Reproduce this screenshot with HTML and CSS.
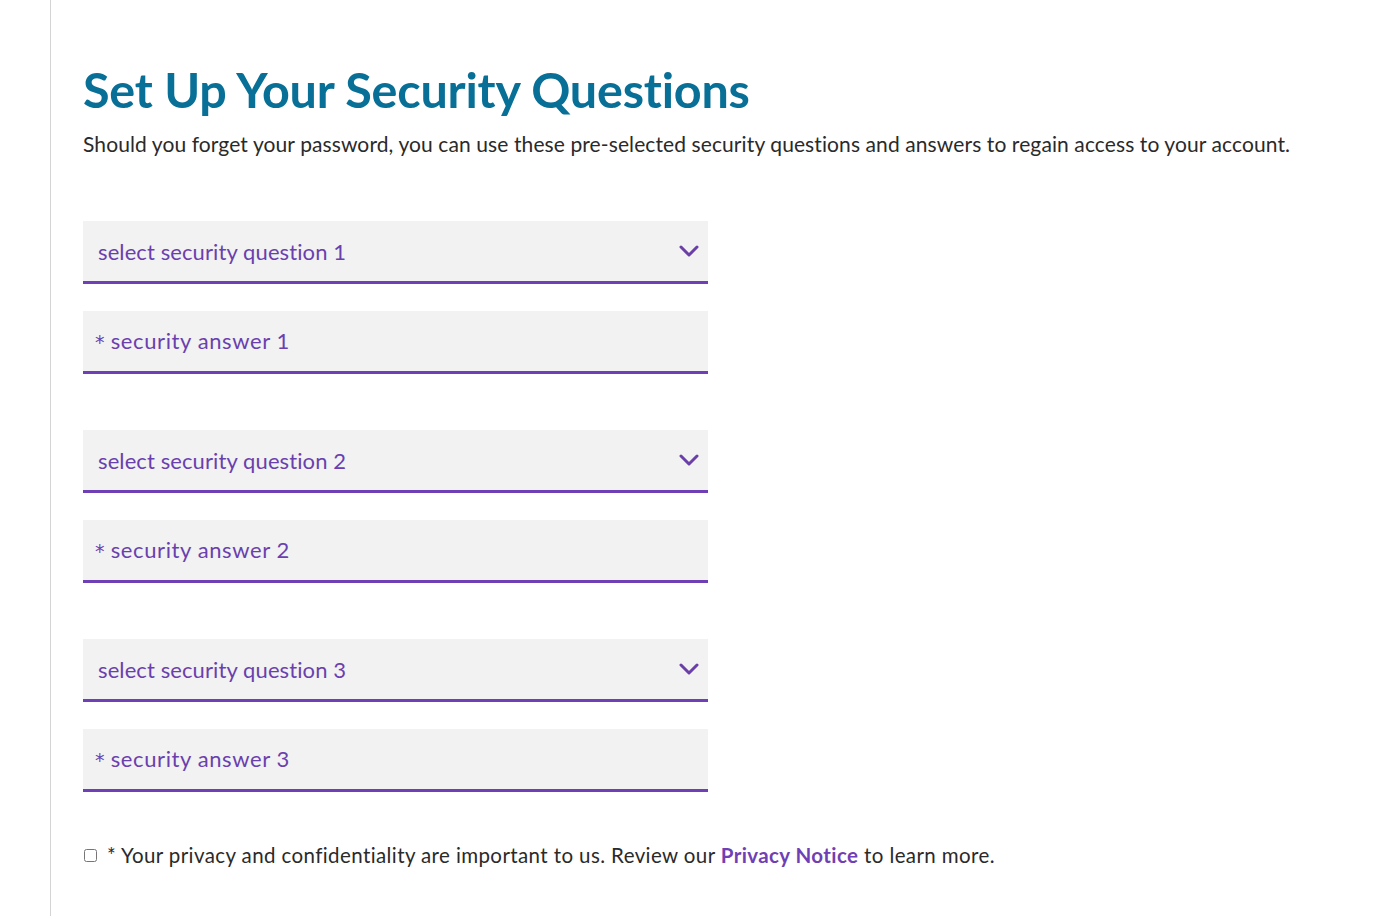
FILE: index.html
```html
<!DOCTYPE html>
<html lang="en">
<head>
<meta charset="utf-8">
<title>Set Up Your Security Questions</title>
<link rel="stylesheet" href="styles.css">
</head>
<body>
<div class="page">
  <main class="content">
    <h1 class="title">Set Up Your Security Questions</h1>
    <p class="intro">Should you forget your password, you can use these pre-selected security questions and answers to regain access to your account.</p>

    <form class="form">
      <div class="group">
        <div class="field select">
          <span class="label">select security question 1</span>
          <svg class="chev" width="20" height="12" viewBox="0 0 20 12"><path d="M2 2 L10 10 L18 2" fill="none" stroke="#6b3fa8" stroke-width="3" stroke-linecap="round" stroke-linejoin="round"/></svg>
        </div>
        <div class="field answer"><span class="label"><span class="star">*</span> security answer 1</span></div>
      </div>
      <div class="group">
        <div class="field select">
          <span class="label">select security question 2</span>
          <svg class="chev" width="20" height="12" viewBox="0 0 20 12"><path d="M2 2 L10 10 L18 2" fill="none" stroke="#6b3fa8" stroke-width="3" stroke-linecap="round" stroke-linejoin="round"/></svg>
        </div>
        <div class="field answer"><span class="label"><span class="star">*</span> security answer 2</span></div>
      </div>
      <div class="group">
        <div class="field select">
          <span class="label">select security question 3</span>
          <svg class="chev" width="20" height="12" viewBox="0 0 20 12"><path d="M2 2 L10 10 L18 2" fill="none" stroke="#6b3fa8" stroke-width="3" stroke-linecap="round" stroke-linejoin="round"/></svg>
        </div>
        <div class="field answer"><span class="label"><span class="star">*</span> security answer 3</span></div>
      </div>

      <label class="consent">
        <input type="checkbox" class="check">
        <span>* Your privacy and confidentiality are important to us. Review our <a class="link" href="#">Privacy Notice</a> to learn more.</span>
      </label>
    </form>
  </main>
</div>
</body>
</html>
```

FILE: styles.css
```css
html, body {
  margin: 0;
  padding: 0;
  background: #ffffff;
}

body {
  font-family: "Lato", "Noto Sans", sans-serif;
  color: #2b2b2b;
}

.page {
  min-height: 916px;
  margin-left: 50px;
  border-left: 1px solid #d4d4d4;
  padding-left: 32px;
  box-sizing: border-box;
}

.content {
  padding-top: 58px;
}

.title {
  margin: 0;
  font-family: "Lato", sans-serif;
  font-weight: 700;
  font-size: 48.5px;
  line-height: 62px;
  color: #086f97;
  letter-spacing: -0.2px;
}

.intro {
  margin: 10px 0 0;
  font-size: 21px;
  line-height: 28px;
  letter-spacing: 0.1px;
  color: #2a2a2a;
}

.form {
  margin-top: 63px;
  width: 625px;
}

.group {
  display: flex;
  flex-direction: column;
  gap: 26.5px;
  margin-bottom: 56.5px;
}

.field {
  height: 60px;
  background: #f2f2f2;
  border-bottom: 3px solid #6f3fb5;
  display: flex;
  align-items: center;
  justify-content: space-between;
  font-size: 22px;
  letter-spacing: 0.1px;
  color: #6a3fae;
}

.select {
  padding: 0 9px 0 15px;
}

.answer {
  padding: 0 12px;
  letter-spacing: 0.6px;
}

.star {
  font-family: "DejaVu Sans", sans-serif;
  font-size: 19px;
  letter-spacing: 0;
}

.chev {
  display: block;
}

.consent {
  display: flex;
  align-items: center;
  gap: 10px;
  width: 1100px;
  margin-top: -5px;
  font-size: 20.5px;
  letter-spacing: 0.4px;
  color: #2a2a2a;
}

.check {
  margin: 0 0 0 1px;
  width: 13px;
  height: 13px;
}

.link {
  color: #6f3fb5;
  font-weight: 700;
  text-decoration: none;
}
```
